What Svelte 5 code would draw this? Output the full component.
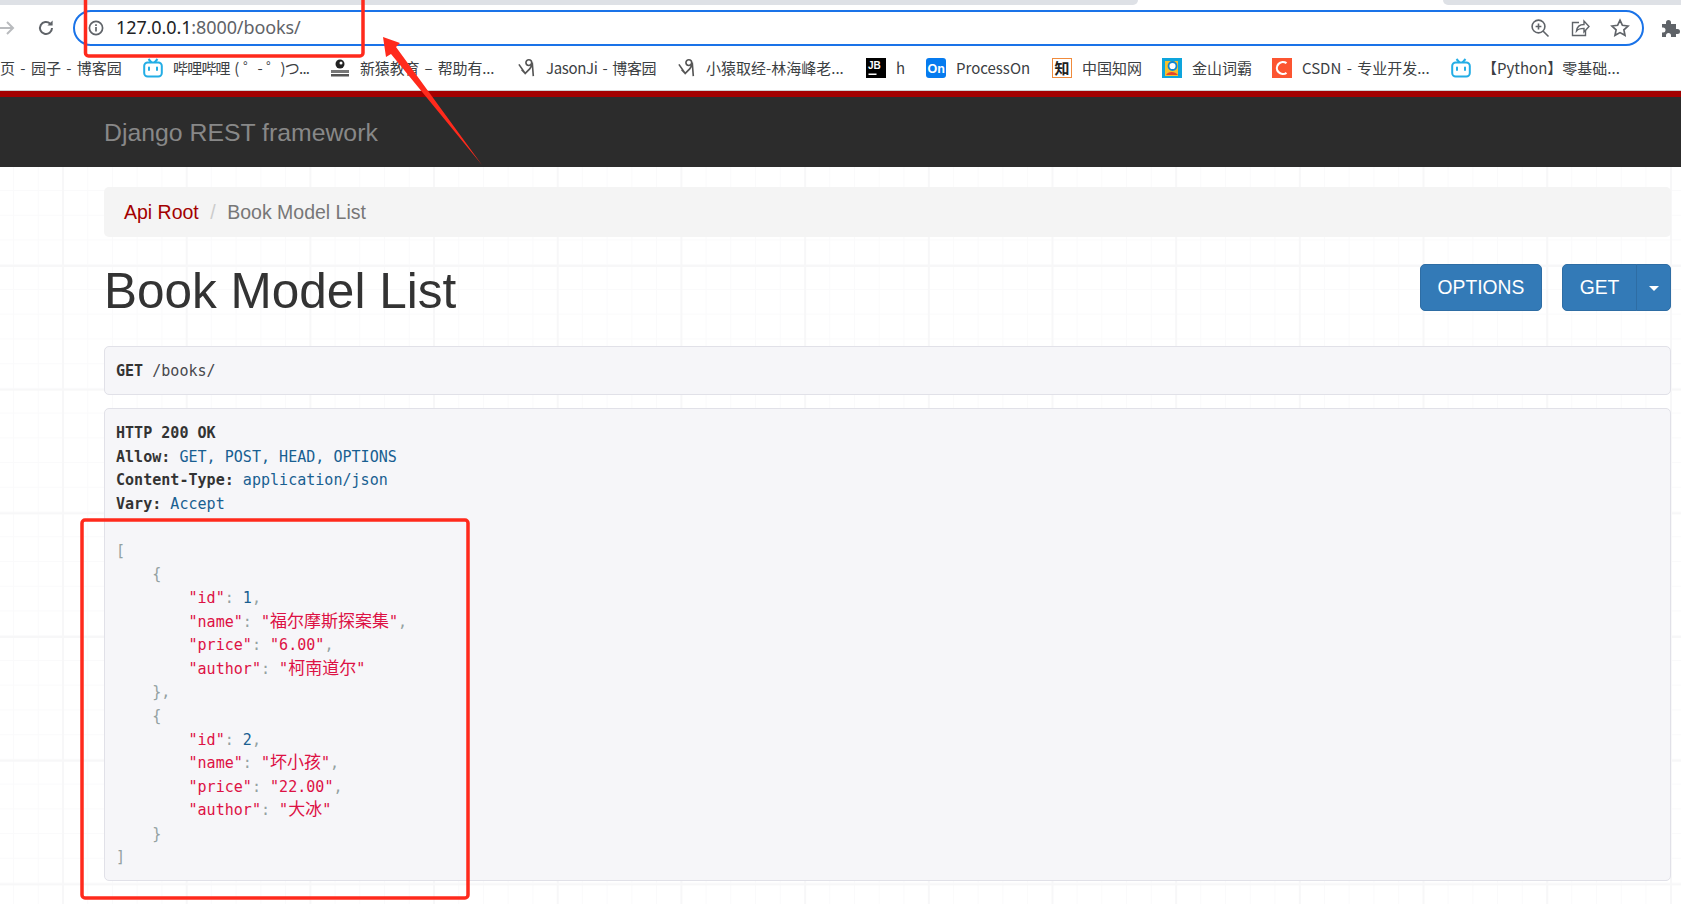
<script>
  const bookmarks = [
    { icon: '', label: '页 - 园子 - 博客园', w: 143 },
    { icon: 'bili', label: '哔哩哔哩 ( ゜- ゜)つ...', w: 187, track: -0.8 },
    { icon: 'xy', label: '新猿教育 – 帮助有...', w: 188, track: -0.15 },
    { icon: 'yuan', label: 'JasonJi - 博客园', w: 160, track: -0.35 },
    { icon: 'yuan', label: '小猿取经-林海峰老...', w: 188 },
    { icon: 'jb', label: 'h', w: 60 },
    { icon: 'on', label: 'ProcessOn', w: 126 },
    { icon: 'zhi', label: '中国知网', w: 110 },
    { icon: 'ciba', label: '金山词霸', w: 110 },
    { icon: 'c', label: 'CSDN - 专业开发...', w: 179 },
    { icon: 'bili', label: '【Python】零基础...', w: 190, gap: 11 }
  ];
</script>

<div class="page">
  <div class="tabstrip">
    <div class="strip-left"></div>
    <div class="strip-right"></div>
  </div>

  <div class="toolbar">
    <svg class="nav-forward" width="16" height="18" viewBox="0 0 16 18" fill="none" stroke="#b9bbbe" stroke-width="2"><path d="M-2 9H13M7 3l6 6-6 6"/></svg>
    <svg class="nav-reload" width="18" height="18" viewBox="0 0 18 18" fill="none" stroke="#5f6368" stroke-width="2"><path d="M15 9a6 6 0 1 1-1.8-4.3"/><path d="M15.6 1.4v5.2h-5.2z" fill="#5f6368" stroke="none"/></svg>
    <div class="omnibox">
      <svg class="info" width="16" height="16" viewBox="0 0 16 16" fill="none" stroke="#5f6368" stroke-width="1.7"><circle cx="8" cy="8" r="6.6"/><path d="M8 7v4.6M8 4.2v1.7"/></svg>
      <span class="url"><span class="host">127.0.0.1</span>:8000/books/</span>
      <span class="spacer"></span>
      <svg class="omni-ic" width="20" height="20" viewBox="0 0 20 20" fill="none" stroke="#5f6368" stroke-width="1.6"><circle cx="8.5" cy="8.5" r="6.4"/><path d="M13 13l5.5 5.5M8.5 5.6v5.8M5.6 8.5h5.8"/></svg>
      <svg class="omni-ic" width="20" height="20" viewBox="0 0 20 20" fill="none" stroke="#5f6368" stroke-width="1.4"><path d="M9 4.5H2.5v13h13V12"/><path d="M6.5 13c.5-4 3.500-6.500 7.500-6.500V3l5 5.500-5 5.500v-3.600c-3 0-5.800.6-7.500 2.600z"/></svg>
      <svg class="omni-ic" width="20" height="20" viewBox="0 0 20 20" fill="none" stroke="#5f6368" stroke-width="1.7"><path d="M10 2.200l2.400 5.100 5.600.7-4.100 3.800 1.100 5.500L10 14.600l-5 2.700 1.100-5.500L2 8l5.600-.7z"/></svg>
    </div>
    <svg class="puzzle" width="20" height="20" viewBox="0 0 20 20" fill="#5f6368"><path d="M2 6h4V4.500a2.500 2.500 0 0 1 5 0V6h5v5h1.500a2.500 2.500 0 0 1 0 5H16v3H11v-1.500a2.500 2.500 0 0 0-5 0V19H2v-4.500h1a2.500 2.500 0 0 0 0-5H2z"/></svg>
  </div>

  <div class="bookmarks">
    {#each bookmarks as b}
      <div class="bm" style="width:{b.w}px">
        {#if b.icon === 'bili'}
          <svg width="20" height="20" viewBox="0 0 20 20" fill="none" stroke="#23ade5" stroke-width="2"><path d="M5.500 1l3 3.500M14.500 1l-3 3.500"/><rect x="1.200" y="4.500" width="17.600" height="14" rx="3.500"/><path d="M6 9.500v2.500M14 9.500v2.500" stroke-linecap="round"/></svg>
        {:else if b.icon === 'xy'}
          <svg width="20" height="20" viewBox="0 0 20 20"><circle cx="10" cy="6" r="4.500" fill="#222"/><circle cx="11" cy="5" r="1.500" fill="#fff"/><rect x="1" y="12" width="18" height="3" fill="#777"/><rect x="1" y="16" width="18" height="2.500" fill="#555"/></svg>
        {:else if b.icon === 'yuan'}
          <svg width="18" height="22" viewBox="0 0 20 22" fill="none" stroke="#555" stroke-width="1.800"><circle cx="12" cy="5" r="3.200"/><path d="M1 7l7 10 5-5 3-5 1 13M8 17L4 13"/></svg>
        {:else if b.icon === 'jb'}
          <svg width="20" height="20" viewBox="0 0 20 20"><rect width="20" height="20" fill="#000"/><text x="2" y="11" class="svgtxt" font-size="10" fill="#fff">JB</text><rect x="2.500" y="15.500" width="8" height="1.500" fill="#fff"/></svg>
        {:else if b.icon === 'on'}
          <svg width="20" height="20" viewBox="0 0 20 20"><rect width="20" height="20" rx="3" fill="#067bef"/><text x="1.500" y="15" class="svgtxt" font-size="12.500" fill="#fff">On</text></svg>
        {:else if b.icon === 'zhi'}
          <span class="zhi">知</span>
        {:else if b.icon === 'ciba'}
          <svg width="20" height="20" viewBox="0 0 20 20"><rect width="20" height="20" fill="#0ea5dc"/><path d="M3 3h13v15H3z" fill="#f6c12c"/><circle cx="10.500" cy="8" r="4" fill="#fff" stroke="#0e86d4" stroke-width="1.800"/><path d="M4 17c2-4 9-4 12 0z" fill="#e8452c"/></svg>
        {:else if b.icon === 'c'}
          <svg width="20" height="20" viewBox="0 0 20 20"><rect width="20" height="20" fill="#fc5531"/><path d="M14.500 5.200A6 6 0 1 0 14.500 14.800" fill="none" stroke="#fff" stroke-width="2.200"/></svg>
        {/if}
        <span class="bm-label" style="margin-left:{b.gap ?? 10}px;letter-spacing:{b.track ?? 0}px">{b.label}</span>
      </div>
    {/each}
  </div>

  <div class="redbar"></div>
  <header class="navbar"><span class="brand">Django REST framework</span></header>

  <main class="main">
    <div class="container">
      <nav class="breadcrumb">
        <a class="crumb-link" href="#root">Api Root</a>
        <span class="crumb-sep">/</span>
        <span class="crumb-current">Book Model List</span>
      </nav>

      <div class="title-row">
        <h1>Book Model List</h1>
        <div class="actions">
          <button class="btn">OPTIONS</button>
          <div class="btn-group">
            <button class="btn get">GET</button>
            <button class="btn caret-btn" aria-label="more"><span class="caret"></span></button>
          </div>
        </div>
      </div>

      <pre class="request"><b>GET</b> <span class="pln">/books/</span></pre>

      <pre class="response"><b>HTTP 200 OK</b>
<b>Allow:</b> <span class="lit">GET, POST, HEAD, OPTIONS</span>
<b>Content-Type:</b> <span class="lit">application/json</span>
<b>Vary:</b> <span class="lit">Accept</span>

<span class="pun">[</span>
    <span class="pun">{'{'}</span>
        <span class="str">"id"</span><span class="pun">:</span> <span class="lit">1</span><span class="pun">,</span>
        <span class="str">"name"</span><span class="pun">:</span> <span class="str">"<span class="cjk">福尔摩斯探案集</span>"</span><span class="pun">,</span>
        <span class="str">"price"</span><span class="pun">:</span> <span class="str">"6.00"</span><span class="pun">,</span>
        <span class="str">"author"</span><span class="pun">:</span> <span class="str">"<span class="cjk">柯南道尔</span>"</span>
    <span class="pun">{'}'},</span>
    <span class="pun">{'{'}</span>
        <span class="str">"id"</span><span class="pun">:</span> <span class="lit">2</span><span class="pun">,</span>
        <span class="str">"name"</span><span class="pun">:</span> <span class="str">"<span class="cjk">坏小孩</span>"</span><span class="pun">,</span>
        <span class="str">"price"</span><span class="pun">:</span> <span class="str">"22.00"</span><span class="pun">,</span>
        <span class="str">"author"</span><span class="pun">:</span> <span class="str">"<span class="cjk">大冰</span>"</span>
    <span class="pun">{'}'}</span>
<span class="pun">]</span></pre>
    </div>
  </main>

  <svg class="annotations" width="1681" height="904" viewBox="0 0 1681 904" fill="none" aria-hidden="true">
    <rect x="85.500" y="-4" width="277.500" height="60" rx="3" stroke="#ff2a1c" stroke-width="3.500"/>
    <rect x="82" y="520" width="386" height="378" rx="3" stroke="#ff2a1c" stroke-width="3.500"/>
    <polygon points="383,37 400,43 396,47 482,165 391,54 386,57" fill="#ff2a1c"/>
  </svg>
</div>

<style>
  :global(body) { margin: 0; background: #fff; }
  .page {
    position: relative;
    display: flex;
    flex-direction: column;
    width: 1681px;
    height: 904px;
    overflow: hidden;
    font-family: "Liberation Sans", Arial, sans-serif;
  }
  .tabstrip { display: flex; justify-content: space-between; height: 5px; flex: none; }
  .strip-left { width: 1138px; background: #dee1e6; border-bottom-right-radius: 5px; }
  .strip-right { width: 238px; background: #dee1e6; border-bottom-left-radius: 5px; }

  .toolbar {
    display: flex;
    align-items: center;
    height: 41px;
    flex: none;
  }
  .nav-forward { flex: none; margin-top: 4px; }
  .nav-reload { margin-left: 21px; flex: none; margin-top: 4px; }
  .omnibox {
    display: flex;
    align-items: center;
    box-sizing: border-box;
    margin-left: 18px;
    margin-top: 5px;
    width: 1571px;
    height: 36px;
    border: 2.500px solid #1a73e8;
    border-radius: 19px;
    padding: 0 12px 0 13px;
    flex: none;
  }
  .info { flex: none; }
  .url {
    margin-left: 12px;
    padding-bottom: 2px;
    font-family: "Noto Sans", sans-serif;
    font-size: 18px;
    color: #5f6368;
    letter-spacing: -0.1px;
  }
  .host { color: #202124; }
  .spacer { flex: 1; }
  .omni-ic { margin-left: 20px; flex: none; }
  .puzzle { margin-left: 16px; flex: none; margin-top: 5px; }

  .bookmarks {
    display: flex;
    align-items: center;
    height: 44px;
    flex: none;
    white-space: nowrap;
    border-bottom: 1px solid #d0d0d0;
    font-family: "Noto Sans CJK SC", "Noto Sans", sans-serif;
    font-size: 15px;
    word-spacing: 2px;
    color: #3c4043;
  }
  .bookmarks .bm { display: flex; align-items: center; flex: none; }
  .bm svg { flex: none; }
  .bm:first-child .bm-label { margin-left: 0 !important; }
  .bm-label { line-height: 20px; }
  .zhi {
    box-sizing: border-box;
    flex: none;
    width: 20px;
    height: 20px;
    border: 1px solid #f08b3c;
    font-size: 15px;
    font-weight: 700;
    line-height: 18px;
    text-align: center;
    color: #222;
  }

  .redbar { height: 6px; background: #a30000; flex: none; }
  .navbar {
    display: flex;
    align-items: center;
    box-sizing: border-box;
    height: 70px;
    padding: 2px 0 0 104px;
    background: #2c2c2c;
    flex: none;
  }
  .brand { font-size: 24.800px; color: #888; }

  .main {
    flex: 1;
    background-color: #fff;
    background-image:
      linear-gradient(#f7f7f8 2px, transparent 2px),
      linear-gradient(90deg, #f7f7f8 2px, transparent 2px),
      linear-gradient(#fafafb 1px, transparent 1px),
      linear-gradient(90deg, #fafafb 1px, transparent 1px);
    background-size: 123.700px 123.700px, 123.700px 123.700px, 24.740px 24.740px, 24.740px 24.740px;
    background-position: 62px 98px, 62px 98px, 13px 23px, 13px 23px;
  }
  .container { margin-left: 104px; width: 1567px; padding-top: 20px; }

  .breadcrumb {
    display: flex;
    align-items: center;
    height: 50px;
    padding-left: 20px;
    background: #f4f4f4;
    border-radius: 5px;
    font-size: 19.500px;
  }
  .crumb-link { color: #a30000; text-decoration: none; }
  .crumb-sep { color: #ccc; margin: 0 11.500px; }
  .crumb-current { color: #777; }

  .title-row {
    display: flex;
    justify-content: space-between;
    align-items: flex-start;
    margin-top: 27px;
    margin-bottom: 35px;
    height: 47px;
  }
  h1 {
    margin: 0;
    font-size: 49.500px;
    font-weight: 400;
    line-height: 54px;
    color: #333;
  }
  .actions { display: flex; gap: 20px; }
  .btn-group { display: flex; }
  .btn {
    height: 47px;
    box-sizing: border-box;
    border: 1px solid #2e6da4;
    border-radius: 5px;
    background: #337ab7;
    color: #fff;
    font-family: "Liberation Sans", Arial, sans-serif;
    font-size: 19.300px;
    padding: 0;
    width: 122px;
  }
  .get { width: 75px; border-radius: 5px 0 0 5px; }
  .caret-btn {
    width: 35px;
    margin-left: -1px;
    border-radius: 0 5px 5px 0;
    display: flex;
    align-items: center;
    justify-content: center;
  }
  .caret {
    width: 0;
    height: 0;
    border-left: 5px solid transparent;
    border-right: 5px solid transparent;
    border-top: 5px solid #fff;
    margin-top: 2px;
  }

  pre {
    margin: 0;
    box-sizing: border-box;
    background: #f6f6f9;
    border: 1px solid #e1e1e8;
    border-radius: 5px;
    padding: 13px 11px 11px;
    font-family: "DejaVu Sans Mono", "Noto Sans CJK SC", monospace;
    font-size: 15.050px;
    line-height: 23.580px;
    color: #333;
    white-space: pre;
  }
  .request { height: 49px; }
  .response { margin-top: 13px; height: 473px; }
  b { font-weight: 700; }
  .pln { color: #48484c; }
  .lit { color: #195f91; }
  .str { color: #dd1144; }
  .pun { color: #93a1a1; }
  .cjk { font-family: "Noto Sans CJK SC", sans-serif; font-size: 17px; line-height: 1; }
  .svgtxt { font-family: "Liberation Sans", sans-serif; font-weight: 700; }

  .annotations { position: absolute; left: 0; top: 0; pointer-events: none; }
</style>
